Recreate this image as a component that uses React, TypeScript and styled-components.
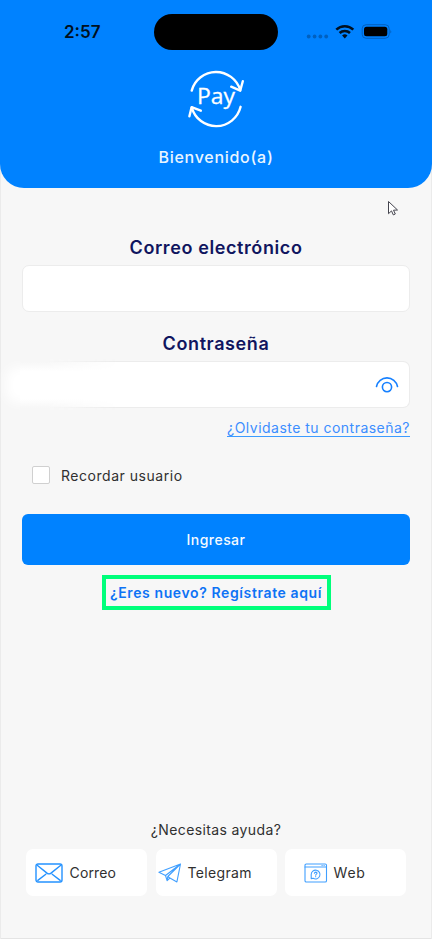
import React from "react";
import styled, { createGlobalStyle } from "styled-components";

const GlobalStyle = createGlobalStyle`
  * { box-sizing: border-box; }
  html, body { margin: 0; padding: 0; }
  body { background: #f7f7f7; font-family: Inter, "Liberation Sans", sans-serif; }
  button, input { font-family: inherit; }
`;

const Screen = styled.main`
  width: 432px;
  height: 939px;
  display: flex;
  flex-direction: column;
  position: relative;
  overflow: hidden;
  background: #f7f7f7;
  box-shadow: inset 1px 0 #ebebeb, inset -1px 0 #ebebeb, inset 0 -1px #e4e4e4;
`;

const Header = styled.header`
  height: 188px;
  flex: none;
  display: flex;
  flex-direction: column;
  align-items: center;
  background: #0082ff;
  border-radius: 0 0 24px 24px;
`;

const StatusBar = styled.div`
  width: 100%;
  height: 70px;
  flex: none;
  display: grid;
  grid-template-columns: 154px 124px 154px;
  padding-top: 14px;
`;

const Clock = styled.time`
  padding-left: 64px;
  font-size: 17px;
  line-height: 36px;
  font-weight: 600;
  color: #001020;
`;

const Island = styled.div`
  height: 36px;
  border-radius: 18px;
  background: #000;
`;

const StatusIcons = styled.svg`
  width: 90px;
  height: 20px;
  margin: 8px 0 0 27px;
`;

const Logo = styled.svg`
  width: 60px;
  height: 60px;
  margin-top: -1px;
`;

const Welcome = styled.h1<{ $track: number }>`
  margin: 16px 0 0;
  font-size: 16px;
  line-height: 24px;
  font-weight: 500;
  color: #eaf5ff;
  letter-spacing: ${(p) => p.$track}px;
`;

const Form = styled.form`
  display: flex;
  flex-direction: column;
  padding: 47px 22px 0;
`;

const FieldLabel = styled.label<{ $track: number }>`
  align-self: center;
  font-size: 18px;
  line-height: 26px;
  font-weight: 600;
  color: #10155f;
  letter-spacing: ${(p) => p.$track}px;
`;

const Field = styled.div<{ $smudged?: boolean }>`
  height: 47px;
  margin: 4px 0 19px;
  display: flex;
  align-items: center;
  position: relative;
  padding-right: 10px;
  background: #fff;
  border: 1px solid #ececec;
  border-radius: 7px;
  ${(p) => p.$smudged && `
    margin-bottom: 7px;
    border-left-color: transparent;
    &::before {
      content: "";
      position: absolute;
      left: -17px;
      top: 5px;
      width: 80px;
      height: 36px;
      background: #fff;
      border-radius: 12px;
      filter: blur(6px);
    }
    &::after {
      content: "";
      position: absolute;
      left: -3px;
      top: -3px;
      width: 100px;
      height: 51px;
      background: linear-gradient(#f7f7f7 6%, #fff 24%, #fff 78%, #f7f7f7 96%);
      mask-image: linear-gradient(90deg, #000 25%, transparent);
      pointer-events: none;
    }
  `}
`;

const Input = styled.input`
  min-width: 0;
  flex: 1;
  height: 100%;
  border: 0;
  outline: 0;
  background: transparent;
`;

const EyeIcon = styled.svg`
  flex: none;
  width: 24px;
  height: 18px;
`;

const ForgotLink = styled.a<{ $track: number }>`
  align-self: flex-end;
  height: 22px;
  font-size: 14px;
  line-height: 25px;
  color: #3c8eff;
  border-bottom: 1px solid #3c9bff;
  white-space: nowrap;
  letter-spacing: ${(p) => p.$track}px;
`;

const Remember = styled.label<{ $track: number }>`
  height: 20px;
  margin: 28px 0 0 10px;
  display: flex;
  align-items: center;
  gap: 11px;
  font-size: 14px;
  color: #303030;
  letter-spacing: ${(p) => p.$track}px;
`;

const Checkbox = styled.input`
  appearance: none;
  width: 18px;
  height: 18px;
  margin: 0;
  background: #fff;
  border: 1px solid #d0d0d0;
  border-radius: 2px;
`;

const Submit = styled.button<{ $track: number }>`
  height: 51px;
  margin-top: 29px;
  border: 0;
  border-radius: 6px;
  background: #0082ff;
  color: #f4faff;
  font-size: 14px;
  font-weight: 500;
  letter-spacing: ${(p) => p.$track}px;
`;

const Register = styled.a<{ $track: number }>`
  align-self: center;
  width: 229px;
  height: 35px;
  margin-top: 10px;
  display: flex;
  align-items: center;
  justify-content: center;
  border: 4px solid #00ff7b;
  color: #0d73f5;
  font-size: 14px;
  font-weight: 600;
  white-space: nowrap;
  letter-spacing: ${(p) => p.$track}px;
`;

const Help = styled.footer`
  margin-top: auto;
  height: 121px;
  padding: 0 26px;
`;

const HelpTitle = styled.p<{ $track: number }>`
  margin: 0 0 7px;
  text-align: center;
  font-size: 14px;
  line-height: 24px;
  color: #303030;
  letter-spacing: ${(p) => p.$track}px;
`;

const Channels = styled.nav`
  display: grid;
  grid-template-columns: repeat(3, 121px);
  justify-content: space-between;
`;

const Channel = styled.a<{ $inset: number; $gap: number; $track: number }>`
  height: 47px;
  display: flex;
  align-items: center;
  gap: ${(p) => p.$gap}px;
  padding-left: ${(p) => p.$inset}px;
  background: #fff;
  border-radius: 7px;
  font-size: 14px;
  color: #303030;
  letter-spacing: ${(p) => p.$track}px;
`;

const ChannelIcon = styled.svg<{ $light?: boolean }>`
  flex: none;
  fill: none;
  stroke: ${(p) => (p.$light ? "#409fff" : "#2492ff")};
  stroke-linejoin: round;
  stroke-linecap: round;
`;

const Pointer = styled.svg`
  position: absolute;
  left: 387px;
  top: 200px;
  width: 12px;
  height: 17px;
`;

export default function App() {
  return (
    <>
      <GlobalStyle />
      <Screen>
        <Header>
          <StatusBar>
            <Clock>2:57</Clock>
            <Island />
            <StatusIcons viewBox="305 22 90 20">
              <g fill="#0060bf">
                <circle cx="308.7" cy="36.5" r="1.9" />
                <circle cx="314.6" cy="36.5" r="1.9" />
                <circle cx="320.4" cy="36.5" r="1.9" />
                <circle cx="326.2" cy="36.5" r="1.9" />
              </g>
              <g fill="none" stroke="#001020" strokeWidth="2.5">
                <path d="M336.3 29.6a12.2 12.2 0 0 1 17 0" />
                <path d="M339.6 33a7.5 7.5 0 0 1 10.4 0" />
              </g>
              <path d="M344.8 38.4l-2.7-2.8a3.9 3.9 0 0 1 5.4 0z" fill="#001020" />
              <rect x="362.2" y="24.7" width="27" height="13.6" rx="4" fill="none" stroke="#0060bf" />
              <rect x="364" y="26.8" width="23.3" height="9.4" rx="2.5" fill="#000" />
              <path d="M390.3 29.5q1.8 2 0 4z" fill="#0060bf" />
            </StatusIcons>
          </StatusBar>
          <Logo viewBox="186 69 60 60">
            <g fill="none" stroke="#fff" strokeWidth="2.4" strokeLinecap="round" strokeLinejoin="round">
              <path d="M191.7 90.6A25.2 25.2 0 0 1 240.2 90" />
              <path d="M231.2 86.7l9 4 2.6-9.5" />
              <path d="M240.6 106.8A25.2 25.2 0 0 1 191.8 107.6" />
              <path d="M189.4 116.3l2.2-9.1 9.2 3.5" />
            </g>
            <text x="197" y="104.3" fill="#fff" stroke="#fff" strokeWidth=".3" fontFamily="Open Sans, sans-serif" fontSize="22.5" fontWeight="500" textLength="38" lengthAdjust="spacingAndGlyphs">Pay</text>
          </Logo>
          <Welcome $track={0.72}>Bienvenido(a)</Welcome>
        </Header>
        <Form>
          <FieldLabel $track={0.6} htmlFor="email">Correo electrónico</FieldLabel>
          <Field><Input id="email" type="email" /></Field>
          <FieldLabel $track={0.6} htmlFor="password">Contraseña</FieldLabel>
          <Field $smudged>
            <Input id="password" type="password" />
            <EyeIcon viewBox="0 0 24 18" fill="none" stroke="#1680ff" strokeWidth="1.6" strokeLinecap="round">
              <path d="M1.5 10.5a10.7 10.7 0 0 1 21 0" />
              <circle cx="12" cy="11.1" r="4.6" />
            </EyeIcon>
          </Field>
          <ForgotLink $track={0.48}>¿Olvidaste tu contraseña?</ForgotLink>
          <Remember $track={0.53}><Checkbox type="checkbox" />Recordar usuario</Remember>
          <Submit $track={0.45} type="button">Ingresar</Submit>
          <Register $track={0.61}>¿Eres nuevo? Regístrate aquí</Register>
        </Form>
        <Help>
          <HelpTitle $track={0.38}>¿Necesitas ayuda?</HelpTitle>
          <Channels>
            <Channel $inset={9} $gap={6.5} $track={0.15}>
              <ChannelIcon width="28" height="20" viewBox="0 0 28 20" strokeWidth="1.4">
                <rect x="1" y="1" width="26" height="18" rx="2" />
                <path d="M2.5 2.5l9.5 7.6q2 1.5 4 0l9.5-7.6M2.8 17.4l8-6.2M25.2 17.4l-8-6.2" />
              </ChannelIcon>
              Correo
            </Channel>
            <Channel $inset={2} $gap={6} $track={0.35}>
              <ChannelIcon $light width="24" height="20" viewBox="0 0 24 20" strokeWidth="1.1">
                <path d="M.9 9.3L22.5 1 18.9 18.9l-7-3.9-2.8 2.7-1.6-5.2zM22.5 1L7.5 12.5M22.5 1L9.8 13.5l2.1 1.5M9.8 13.5l-.7 4.2" />
              </ChannelIcon>
              Telegram
            </Channel>
            <Channel $inset={18.5} $gap={6} $track={0.8}>
              <ChannelIcon $light width="24" height="20" viewBox="0 0 24 20" strokeWidth="1.1">
                <rect x="1" y="1" width="21.5" height="18" rx="1.3" />
                <path d="M1 4h21.5M18 2.5h.2M20 2.5h.2M7.2 15.6v-4.1a4.4 4.4 0 1 1 2 3.7zM10.4 10.3q.2-1.2 1.4-1.2 1.2.1 1.2 1.2c0 .9-1.3.9-1.3 2M11.7 13.6v.1" />
              </ChannelIcon>
              Web
            </Channel>
          </Channels>
        </Help>
        <Pointer viewBox="0 0 12 17">
          <path d="M1.5 1.5v12.2l3-2.8 1.8 4 2-.9-1.8-3.8 4-.2z" fill="#fff" stroke="#44444e" strokeWidth="1" />
        </Pointer>
      </Screen>
    </>
  );
}
